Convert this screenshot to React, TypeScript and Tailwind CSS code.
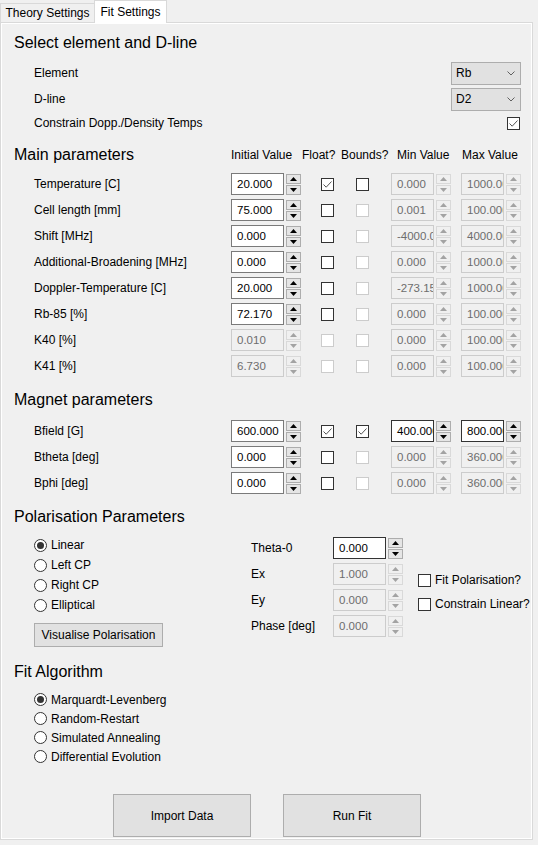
import React from "react";

function Arrow({ up, on }: { up?: boolean; on: boolean }) {
  return (
    <svg width="7" height="4" viewBox="0 0 7 4">
      <path d={up ? "M0 4 L3.5 0 L7 4 Z" : "M0 0 L3.5 4 L7 0 Z"} fill={on ? "#000000" : "#a3a3a3"} />
    </svg>
  );
}

function Spin({ value, w, on = true, dark = false }: { value: string; w: string; on?: boolean; dark?: boolean }) {
  const box = on
    ? `bg-white text-black ${dark ? "border-[#333333]" : "border-[#7a7a7a]"}`
    : "bg-[#f0f0f0] text-[#6d6d6d] border-[#cccccc]";
  const btn = on ? "bg-[#e5e5e5] border-[#adadad]" : "bg-[#f0f0f0] border-[#d9d9d9]";
  return (
    <div className="flex items-center gap-[2px]">
      <div className={`${w} h-[22px] border ${box} overflow-hidden whitespace-nowrap pl-[5px] text-[11.5px] leading-[20px]`}>
        {value}
      </div>
      <div className="flex flex-col gap-[1px]">
        <div className={`w-[15px] h-[10px] border ${btn} flex items-center justify-center`}>
          <Arrow up on={on} />
        </div>
        <div className={`w-[15px] h-[10px] border ${btn} flex items-center justify-center`}>
          <Arrow on={on} />
        </div>
      </div>
    </div>
  );
}

function Check({ on = true, checked = false }: { on?: boolean; checked?: boolean }) {
  return (
    <div
      className={`w-[13px] h-[13px] border bg-white flex items-center justify-center ${
        on ? "border-[#333333]" : "border-[#cccccc]"
      }`}
    >
      {checked && (
        <svg width="11" height="11" viewBox="0 0 11 11">
          <path d="M1.5 5.5 L4.2 8.2 L9.5 2.5" fill="none" stroke="#555555" strokeWidth="1" />
        </svg>
      )}
    </div>
  );
}

function Radio({ checked = false, label }: { checked?: boolean; label: string }) {
  return (
    <div className="flex items-center gap-[4px] h-full">
      <div className="w-[13px] h-[13px] rounded-full border border-[#333333] bg-white flex items-center justify-center">
        {checked && <div className="w-[7px] h-[7px] rounded-full bg-[#333333]" />}
      </div>
      <span>{label}</span>
    </div>
  );
}

function Combo({ value }: { value: string }) {
  return (
    <div className="w-[70px] h-[23px] border border-[#adadad] bg-[#e1e1e1] flex items-center justify-between pl-[4px] pr-[5px]">
      <span>{value}</span>
      <svg width="8" height="5" viewBox="0 0 8 5">
        <path d="M0.5 0.5 L4 4 L7.5 0.5" fill="none" stroke="#606060" strokeWidth="1" />
      </svg>
    </div>
  );
}

type Param = {
  label: string;
  init: string;
  initOn?: boolean;
  float?: boolean;
  floatOn?: boolean;
  bounds?: boolean;
  boundsOn?: boolean;
  min: string;
  max: string;
  rangeOn?: boolean;
};

const mainParams: Param[] = [
  { label: "Temperature [C]", init: "20.000", float: true, boundsOn: true, min: "0.000", max: "1000.000" },
  { label: "Cell length [mm]", init: "75.000", min: "0.001", max: "100.000" },
  { label: "Shift [MHz]", init: "0.000", min: "-4000.000", max: "4000.000" },
  { label: "Additional-Broadening [MHz]", init: "0.000", min: "0.000", max: "1000.000" },
  { label: "Doppler-Temperature [C]", init: "20.000", min: "-273.150", max: "1000.000" },
  { label: "Rb-85 [%]", init: "72.170", min: "0.000", max: "100.000" },
  { label: "K40 [%]", init: "0.010", initOn: false, floatOn: false, min: "0.000", max: "100.000" },
  { label: "K41 [%]", init: "6.730", initOn: false, floatOn: false, min: "0.000", max: "100.000" },
];

const magnetParams: Param[] = [
  { label: "Bfield [G]", init: "600.000", float: true, bounds: true, boundsOn: true, min: "400.000", max: "800.000", rangeOn: true },
  { label: "Btheta [deg]", init: "0.000", min: "0.000", max: "360.000" },
  { label: "Bphi [deg]", init: "0.000", min: "0.000", max: "360.000" },
];

function ParamRow({ p }: { p: Param }) {
  return (
    <div className="flex items-center h-[26px] pl-[33px]">
      <div className="w-[197px] whitespace-nowrap">{p.label}</div>
      <div className="w-[70px]">
        <Spin value={p.init} w="w-[53px]" on={p.initOn !== false} />
      </div>
      <div className="w-[40px] pl-[20px]">
        <Check checked={p.float} on={p.floatOn !== false} />
      </div>
      <div className="w-[50px] pl-[15px]">
        <Check checked={p.bounds} on={!!p.boundsOn} />
      </div>
      <div className="w-[70px]">
        <Spin value={p.min} w="w-[43px]" on={!!p.rangeOn} dark={!!p.rangeOn} />
      </div>
      <Spin value={p.max} w="w-[43px]" on={!!p.rangeOn} dark={!!p.rangeOn} />
    </div>
  );
}

function Heading({ children }: { children: React.ReactNode }) {
  return <div className="h-[26px] flex items-center pl-[13px] text-[16px] text-black">{children}</div>;
}

export default function App() {
  return (
    <div className="w-[538px] h-[845px] bg-[#f0f0f0] text-[12px] text-black font-['Liberation_Sans',Arial,sans-serif] overflow-hidden">
      {/* Tabs */}
      <div className="flex items-end h-[22px]">
        <div className="w-[95px] h-[19px] border-t border-l border-r border-[#d9d9d9] bg-[#f0f0f0] flex items-center justify-center">
          Theory Settings
        </div>
        <div className="relative z-10 -ml-px -mb-px w-[73px] h-[23px] border-t border-l border-r border-[#d9d9d9] bg-white flex items-center justify-center pb-[1px]">
          Fit Settings
        </div>
      </div>

      {/* Pane */}
      <div className="w-[533px] border border-[#d9d9d9] shadow-[inset_1px_1px_0_#ffffff,inset_-1px_-1px_0_#ffffff] pt-[10px] pb-[2px]">
        <div className="h-[20px] flex items-center pl-[13px] text-[16px]">Select element and D-line</div>

        <div className="mt-[7px] pl-[33px] pr-[11px]">
          <div className="h-[26px] flex items-center justify-between">
            <span>Element</span>
            <Combo value="Rb" />
          </div>
          <div className="h-[26px] flex items-center justify-between">
            <span>D-line</span>
            <Combo value="D2" />
          </div>
          <div className="h-[22px] flex items-center justify-between pr-[1px]">
            <span>Constrain Dopp./Density Temps</span>
            <Check checked />
          </div>
        </div>

        {/* Main parameters */}
        <div className="mt-[8px] h-[26px] flex items-center whitespace-nowrap">
          <div className="w-[230px] pl-[13px] text-[16px]">Main parameters</div>
          <div className="w-[70px]">Initial Value</div>
          <div className="w-[40px] pl-[1px]">Float?</div>
          <div className="w-[50px]">Bounds?</div>
          <div className="w-[70px] pl-[6px]">Min Value</div>
          <div className="pl-[1px]">Max Value</div>
        </div>
        <div className="mt-[3px]">
          {mainParams.map((p) => (
            <ParamRow key={p.label} p={p} />
          ))}
        </div>

        {/* Magnet parameters */}
        <div className="mt-[8px]">
          <Heading>Magnet parameters</Heading>
        </div>
        <div className="mt-[5px]">
          {magnetParams.map((p) => (
            <ParamRow key={p.label} p={p} />
          ))}
        </div>

        {/* Polarisation */}
        <div className="mt-[8px]">
          <Heading>Polarisation Parameters</Heading>
        </div>
        <div className="h-[129px] flex pt-[5px]">
          <div className="w-[250px] pl-[33px]">
            <div className="h-[20px]"><Radio checked label="Linear" /></div>
            <div className="h-[20px]"><Radio label="Left CP" /></div>
            <div className="h-[20px]"><Radio label="Right CP" /></div>
            <div className="h-[20px]"><Radio label="Elliptical" /></div>
            <div className="mt-[8px] w-[129px] h-[24px] border border-[#adadad] bg-[#e1e1e1] flex items-center justify-center">
              Visualise Polarisation
            </div>
          </div>
          <div className="w-[167px]">
            <div className="h-[26px] flex items-center">
              <div className="w-[82px]">Theta-0</div>
              <Spin value="0.000" w="w-[53px]" dark />
            </div>
            <div className="h-[26px] flex items-center">
              <div className="w-[82px]">Ex</div>
              <Spin value="1.000" w="w-[53px]" on={false} />
            </div>
            <div className="h-[26px] flex items-center">
              <div className="w-[82px]">Ey</div>
              <Spin value="0.000" w="w-[53px]" on={false} />
            </div>
            <div className="h-[26px] flex items-center">
              <div className="w-[82px]">Phase [deg]</div>
              <Spin value="0.000" w="w-[53px]" on={false} />
            </div>
          </div>
          <div className="pt-[33px]">
            <div className="h-[24px] flex items-center gap-[4px]">
              <Check />
              <span>Fit Polarisation?</span>
            </div>
            <div className="h-[24px] flex items-center gap-[4px]">
              <Check />
              <span>Constrain Linear?</span>
            </div>
          </div>
        </div>

        {/* Fit algorithm */}
        <Heading>Fit Algorithm</Heading>
        <div className="pt-[5px] pl-[33px]">
          <div className="h-[19px]"><Radio checked label="Marquardt-Levenberg" /></div>
          <div className="h-[19px]"><Radio label="Random-Restart" /></div>
          <div className="h-[19px]"><Radio label="Simulated Annealing" /></div>
          <div className="h-[19px]"><Radio label="Differential Evolution" /></div>
        </div>

        <div className="mt-[28px] flex pl-[112px] gap-[32px]">
          <div className="w-[138px] h-[43px] border border-[#adadad] bg-[#e1e1e1] flex items-center justify-center">
            Import Data
          </div>
          <div className="w-[138px] h-[43px] border border-[#adadad] bg-[#e1e1e1] flex items-center justify-center">
            Run Fit
          </div>
        </div>
      </div>
    </div>
  );
}
